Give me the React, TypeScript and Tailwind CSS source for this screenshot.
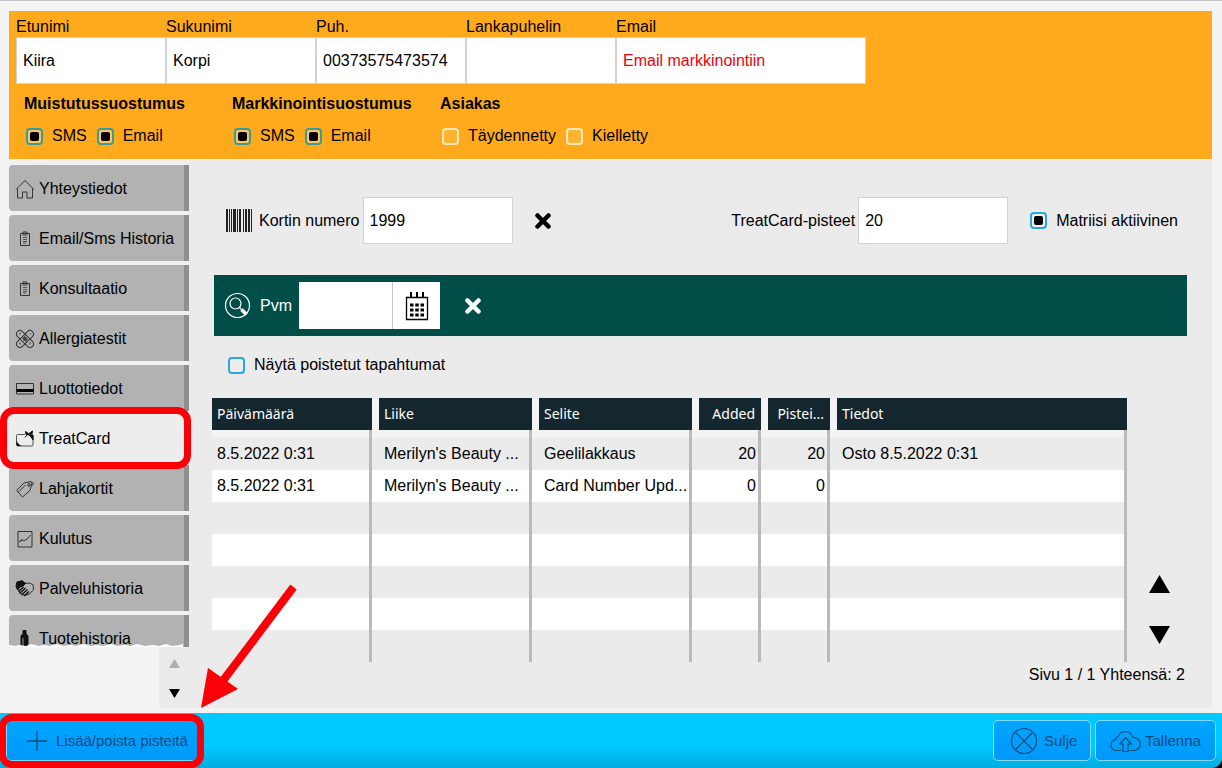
import React from "react";

type IconProps = { children: React.ReactNode };

const SideIcon = ({ children }: IconProps) => (
  <svg width="20" height="20" viewBox="0 0 20 20" fill="none" stroke="#333" strokeWidth="1" className="shrink-0" aria-hidden="true">
    {children}
  </svg>
);

const HomeIcon = () => (
  <SideIcon>
    <path d="M1 10.500 10 1.500l9 9M2.500 9.500v9.500h5v-6h4.500v6h5.500V9.500" />
  </SideIcon>
);

const ClipboardIcon = () => (
  <SideIcon>
    <path d="M5.500 4.500h9v12h-9zM8 4.500v-1.500h4v1.500M7.500 6h5" />
    <path d="M8 8.500h4M8 10.500h4M8 12.500h4M8 14h3" stroke="#555" />
  </SideIcon>
);

const PlasterIcon = () => (
  <SideIcon>
    <g transform="rotate(45 10 10)">
      <rect x="-0.500" y="6.500" width="21" height="7" rx="3.500" />
      <path d="M6.500 6.500v7M13.500 6.500v7" />
    </g>
    <g transform="rotate(-45 10 10)">
      <path d="M6.500 6.500H3a3.500 3.500 0 0 0 0 7h3.500M13.500 6.500H17a3.500 3.500 0 0 1 0 7h-3.500" />
    </g>
    <path d="M7.500 8.500l4 4M9 7.500l3.500 3.500M8.500 11.500l3-3" strokeWidth="1.200" />
    <path d="M4 5h1M5 4h1M14 15h1M15 14h1M4 14h1M5 15h1M15 5h1" />
  </SideIcon>
);

const CreditCardIcon = () => (
  <SideIcon>
    <path d="M1.500 4.500h17v10.500h-17z" />
    <path d="M1.500 11.500h17" stroke="#000" strokeWidth="3" />
  </SideIcon>
);

const GiftCardIcon = () => (
  <SideIcon>
    <path d="M10 5.500H2.500a1 1 0 0 0-1 1V16a1 1 0 0 0 1 1H17a1 1 0 0 0 1-1V6.500" stroke="#555" />
    <path d="M1.500 11.500c1 2.500 2.500 4 5 5.500H2.500l-1-1z" fill="#111" stroke="none" />
    <path d="M13 5.500c2 1 3.500 3 5 5.500V6z" fill="#111" stroke="#111" />
    <path d="M13.500 4.500 10.500 2.500l.5 3zM14 4.500 17.500 2 17 5z" fill="#111" stroke="#111" />
    <path d="m13 5-3 3.500" stroke="#111" />
  </SideIcon>
);

const TagIcon = () => (
  <SideIcon>
    <path d="M1.500 11.500 9 4l7-1.500 1 1.500-2 7.500L7.500 18zM3.500 13 10.500 6" />
    <circle cx="14" cy="6" r="1.300" />
    <path d="M16 3.500c2-1 2.500 1 1.500 3" />
  </SideIcon>
);

const ChartIcon = () => (
  <SideIcon>
    <path d="M3 2.500h14v15.500H3zM4.500 12.500l2.500-2 2 1.500 3-2 3.500-4M4.500 13l2.500-2" />
  </SideIcon>
);

const HandsIcon = () => (
  <SideIcon>
    <path d="M2 3.500 7 2l4 2.500 3-.5 4 1.500.5 5-4 4.500-5 1.500-4-2-3-5z" />
    <path d="M2 3 7 1.800l3.500 2.700L8 7 5 8l-2.500 3L1 7z" fill="#111" stroke="#111" />
    <path d="m3.500 12.500 5-4.500M4.500 14.500l6-5.500M6.500 16l6-5.500M9 17l5-4.500" stroke="#111" strokeWidth="1.400" />
  </SideIcon>
);

const BottleIcon = () => (
  <SideIcon>
    <path d="M8 1.500h3v3l2 2.500V20H6V7l2-2.500z" fill="#111" stroke="#111" />
    <path d="M8 9v9" stroke="#999" />
  </SideIcon>
);

const CrossIcon = () => (
  <svg width="16" height="16" viewBox="0 0 16 16" stroke="currentColor" strokeWidth="4.500" aria-hidden="true">
    <path d="M2.500 2.500l11 11M13.500 2.500l-11 11" strokeLinecap="round" />
  </svg>
);

const BarcodeIcon = () => (
  <svg width="27" height="23" viewBox="0 0 27 23" fill="#222" className="shrink-0" aria-hidden="true">
    <path d="M0 0h2v23H0zM3 0h1v23H3zM5 0h1v23H5zM7 0h3v23H7zM11 0h1v23h-1zM13 0h2v23h-2zM17 0h1v23h-1zM19 0h2v23h-2zM22 0h2v23h-2zM25 0h1v23h-1z" />
  </svg>
);

const SearchIcon = () => (
  <svg width="27" height="27" viewBox="0 0 27 27" fill="none" stroke="#fff" className="shrink-0" aria-hidden="true">
    <circle cx="13.500" cy="13.500" r="12" strokeWidth="1.200" />
    <circle cx="11.500" cy="11.500" r="5.500" strokeWidth="1.200" />
    <path d="m15.500 15.500 2 2" strokeWidth="1.200" />
    <path d="m17.500 17.500 5 5" strokeWidth="3.500" />
  </svg>
);

const CalendarIcon = () => (
  <svg width="24" height="30" viewBox="0 0 24 30" fill="none" stroke="#000" aria-hidden="true">
    <path d="M1.500 6.500h21v22h-21z" strokeWidth="1.300" />
    <path d="M6 1v6M12 1v6M18 1v6" strokeWidth="2" />
    <path d="M5 14h14M5 19h14M5 24h14" strokeWidth="3" strokeDasharray="3.500 1.750" />
  </svg>
);

const menu = [
  { label: "Yhteystiedot", Icon: HomeIcon },
  { label: "Email/Sms Historia", Icon: ClipboardIcon },
  { label: "Konsultaatio", Icon: ClipboardIcon },
  { label: "Allergiatestit", Icon: PlasterIcon },
  { label: "Luottotiedot", Icon: CreditCardIcon },
  { label: "TreatCard", Icon: GiftCardIcon, active: true },
  { label: "Lahjakortit", Icon: TagIcon },
  { label: "Kulutus", Icon: ChartIcon },
  { label: "Palveluhistoria", Icon: HandsIcon },
  { label: "Tuotehistoria", Icon: BottleIcon, cut: true },
];

const fields = [
  { id: "etunimi", label: "Etunimi", value: "Kiira", style: "w-[150px] text-black" },
  { id: "sukunimi", label: "Sukunimi", value: "Korpi", style: "w-[150px] text-black" },
  { id: "puh", label: "Puh.", value: "00373575473574", style: "w-[150px] text-black" },
  { id: "lankapuhelin", label: "Lankapuhelin", value: "", style: "w-[150px] text-black" },
  { id: "email", label: "Email", value: "Email markkinointiin", style: "w-[250px] text-[#f0000c]" },
];

const consents = [
  { title: "Muistutussuostumus", tone: "border-[#3a9c98]", options: ["SMS", "Email"], checked: true },
  { title: "Markkinointisuostumus", tone: "border-[#3a9c98]", options: ["SMS", "Email"], checked: true },
  { title: "Asiakas", tone: "border-[#ffe9b8]", options: ["Täydennetty", "Kielletty"], checked: false },
];

const columns = [
  { title: "Päivämäärä", width: "w-[160px]", numeric: false },
  { title: "Liike", width: "w-[160px]", numeric: false },
  { title: "Selite", width: "w-[160px]", numeric: false },
  { title: "Added", width: "w-[69px]", numeric: true },
  { title: "Pistei...", width: "w-[69px]", numeric: true },
  { title: "Tiedot", width: "", numeric: false },
];

const rows = [
  ["8.5.2022 0:31", "Merilyn's Beauty ...", "Geelilakkaus", "20", "20", "Osto 8.5.2022 0:31"],
  ["8.5.2022 0:31", "Merilyn's Beauty ...", "Card Number Upd...", "0", "0", ""],
  ["", "", "", "", "", ""],
  ["", "", "", "", "", ""],
  ["", "", "", "", "", ""],
  ["", "", "", "", "", ""],
  ["", "", "", "", "", ""],
];

function Check({ label, tone, checked }: { label: string; tone: string; checked?: boolean }) {
  return (
    <label className="flex items-center gap-[9px] whitespace-nowrap">
      <input
        type="checkbox"
        defaultChecked={checked}
        className={`grid size-[17px] shrink-0 appearance-none place-content-center rounded-[4px] border-2 bg-white/10 checked:bg-white/30 checked:before:block checked:before:size-[9px] checked:before:rounded-[2px] checked:before:bg-black checked:before:content-[''] ${tone}`}
      />
      {label}
    </label>
  );
}

function Header() {
  return (
    <header className="mr-[10px] ml-[9px] mt-[10px] bg-[#ffaa1c] pb-[11px] pl-[7px] text-black">
      <div className="flex pt-[5px]">
        {fields.map((f) => (
          <div key={f.id} className="flex flex-col">
            <label htmlFor={f.id} className="leading-[21px]">
              {f.label}
            </label>
            <input
              id={f.id}
              defaultValue={f.value}
              className={`h-[47px] border border-[#d2d2d2] bg-white px-[6px] outline-none ${f.style}`}
            />
          </div>
        ))}
      </div>
      <div className="flex pt-2 pl-2">
        {consents.map((c) => (
          <fieldset key={c.title} className="w-52">
            <legend className="font-bold leading-6">{c.title}</legend>
            <div className="flex gap-[10px] pt-2 pl-[2px]">
              {c.options.map((o) => (
                <Check key={o} label={o} tone={c.tone} checked={c.checked} />
              ))}
            </div>
          </fieldset>
        ))}
      </div>
    </header>
  );
}

function Sidebar() {
  return (
    <aside className="flex w-[180px] shrink-0 flex-col bg-[#f3f3f3]">
      <nav className="flex flex-col gap-1 bg-[#f1f1f1] pt-[5px]">
        {menu.map(({ label, Icon, active, cut }) => (
          <div key={label} className={cut ? "relative h-8 overflow-hidden" : "relative h-[46px]"}>
            <button
              type="button"
              className={`flex h-[46px] w-full items-center gap-1 rounded-l-[4px] pt-[2px] pl-[6px] text-left text-black ${
                active ? "bg-[#ededed]" : "border-r-[5px] border-[#8f8f8f] bg-[#b2b2b2]"
              }`}
            >
              <Icon />
              {label}
            </button>
            {active && (
              <span className="pointer-events-none absolute -top-2 -right-[2px] -bottom-2 -left-[9px] z-10 rounded-[14px] border-[7px] border-[#fb0007]" />
            )}
            {cut && (
              <svg className="absolute bottom-0 left-0 w-full" height="4" viewBox="0 0 180 4" preserveAspectRatio="none" aria-hidden="true">
                <path
                  fill="#fff"
                  d="M0 4V2l6 1 5-1 6 1 5-2 8 2 5-1 6 1 7-2 6 2 8-1 5 1 7-2 8 2 6-1 6 1 8-2 6 2 8-1 6 1 6-2 8 2 8-1 6 1 7-2 6 2 8-1 3-1v3z"
                />
              </svg>
            )}
          </div>
        ))}
      </nav>
      <div className="flex w-[30px] flex-1 flex-col items-center gap-[21px] self-end bg-[#ebebeb] pt-3">
        <button type="button" aria-label="Edellinen">
          <svg width="11" height="9" viewBox="0 0 11 9" fill="#b0b0b0" className="block" aria-hidden="true">
            <path d="M5.500 0 11 9H0z" />
          </svg>
        </button>
        <button type="button" aria-label="Seuraava">
          <svg width="11" height="9" viewBox="0 0 11 9" className="block" aria-hidden="true">
            <path d="M0 0h11L5.500 9z" />
          </svg>
        </button>
      </div>
    </aside>
  );
}

function History() {
  return (
    <table className="w-full flex-1 table-fixed border-separate border-spacing-0">
      <thead>
        <tr>
          {columns.map((c, i) => (
            <th
              key={c.title}
              className={`h-8 overflow-hidden border-[#f3f3f3] bg-[#15272e] p-0 font-['Noto_Sans'] text-[14px] font-normal whitespace-nowrap text-white ${c.width} ${
                i > 0 ? "border-l-[7px]" : ""
              } ${c.numeric ? "pr-[6px] text-right" : "pl-[5px] text-left"}`}
            >
              {c.title}
            </th>
          ))}
        </tr>
      </thead>
      <tbody>
        <tr aria-hidden="true">
          {columns.map((c) => (
            <td key={c.title} className="h-2 border-r-[3px] border-[#bababa] bg-[#f3f3f3] p-0" />
          ))}
        </tr>
        {rows.map((r, y) => (
          <tr key={y} className={y % 2 ? "bg-white" : "bg-[#ebebeb]"}>
            {r.map((cell, x) => (
              <td
                key={x}
                className={`h-8 overflow-hidden border-r-[3px] border-[#bababa] py-0 whitespace-nowrap ${
                  columns[x].numeric ? "pr-[2px] pl-0 text-right" : x === 0 ? "pr-0 pl-[5px]" : "pr-0 pl-3"
                }`}
              >
                {cell}
              </td>
            ))}
          </tr>
        ))}
      </tbody>
    </table>
  );
}

function CardPanel() {
  return (
    <main className="flex-1 bg-[#ebebeb] pt-[37px] pr-[25px] pb-5 pl-[23px] text-black">
      <div className="flex items-center pr-[9px] pl-[14px]">
        <BarcodeIcon />
        <label htmlFor="kortti" className="mr-[3px] ml-[6px]">
          Kortin numero
        </label>
        <input id="kortti" defaultValue="1999" className="h-[47px] w-[150px] border border-[#d2d2d2] bg-white px-[6px] outline-none" />
        <button type="button" aria-label="Tyhjennä kortti" className="ml-[22px]">
          <CrossIcon />
        </button>
        <label htmlFor="pisteet" className="mr-[3px] ml-auto">
          TreatCard-pisteet
        </label>
        <input id="pisteet" defaultValue="20" className="mr-[22px] h-[47px] w-[150px] border border-[#d2d2d2] bg-white px-[6px] outline-none" />
        <Check label="Matriisi aktiivinen" tone="border-[#2ba6df]" checked />
      </div>

      <div className="mt-[31px] ml-[2px] flex h-[61px] items-center bg-[#014d47] pl-[10px] text-white">
        <SearchIcon />
        <label htmlFor="pvm" className="mr-[7px] ml-[9px]">
          Pvm
        </label>
        <input id="pvm" className="h-[47px] w-[93px] bg-white px-[6px] text-black outline-none" />
        <button type="button" aria-label="Kalenteri" className="flex h-[47px] w-12 items-center justify-center border-l border-[#c8c8c8] bg-white">
          <CalendarIcon />
        </button>
        <button type="button" aria-label="Tyhjennä päivä" className="ml-[25px]">
          <CrossIcon />
        </button>
      </div>

      <div className="mb-1 flex h-[58px] items-center pl-4">
        <Check label="Näytä poistetut tapahtumat" tone="border-[#2ba6df]" />
      </div>

      <div className="flex">
        <History />
        <div className="flex w-[60px] shrink-0 flex-col items-end justify-end gap-[33px] pr-[17px] pb-[18px]">
          <button type="button" aria-label="Edellinen sivu">
            <svg width="21" height="18" viewBox="0 0 21 18" className="block" aria-hidden="true">
              <path d="M10.500 0 21 18H0z" />
            </svg>
          </button>
          <button type="button" aria-label="Seuraava sivu">
            <svg width="21" height="18" viewBox="0 0 21 18" className="block" aria-hidden="true">
              <path d="M0 0h21L10.500 18z" />
            </svg>
          </button>
        </div>
      </div>
      <p className="pr-[2px] text-right leading-[26px]">Sivu 1 / 1 Yhteensä: 2</p>
    </main>
  );
}

const footerButton =
  "flex h-[41px] items-center rounded-[5px] border border-[#7fdcff] bg-linear-to-b from-[#00a6ff] to-[#0098fb] text-[15px] text-[#0b4a7c]";

function Footer() {
  return (
    <div className="bg-black">
      <footer className="flex h-[55px] items-start rounded-br-[10px] bg-linear-to-b from-[#00c9ff] from-60% to-[#00addf] px-[6px] pt-[7px]">
        <div className="relative">
          <button type="button" className={`${footerButton} w-[192px] gap-[9px] pl-5`}>
            <svg width="20" height="20" viewBox="0 0 20 20" stroke="#0b4a7c" strokeWidth="1.300" aria-hidden="true">
              <path d="M10 0v20M0 10h20" />
            </svg>
            Lisää/poista pisteitä
          </button>
          <span className="pointer-events-none absolute -top-[6px] -right-[6px] -bottom-[7px] -left-[7px] rounded-[13px] border-[7px] border-[#fb0007]" />
        </div>
        <button type="button" className={`${footerButton} ml-auto w-[98px] gap-[6px] pl-4`}>
          <svg width="28" height="28" viewBox="0 0 28 28" fill="none" stroke="#0b4a7c" strokeWidth="1.200" aria-hidden="true">
            <circle cx="14" cy="14" r="12.500" />
            <path d="m6 6 16 16M22 6 6 22" />
          </svg>
          Sulje
        </button>
        <button type="button" className={`${footerButton} ml-1 w-[121px] gap-1 pl-[14px]`}>
          <svg width="31" height="24" viewBox="0 0 31 24" fill="none" stroke="#0b4a7c" strokeWidth="1.200" aria-hidden="true">
            <path d="M11 21.500H6.500a5.500 5.500 0 0 1-1-10.900A4 4 0 0 1 8 7.500 8 8 0 0 1 23 8.500a6.500 6.500 0 0 1 1.500 13H19" />
            <path d="M13 22.500V15h-3l5.500-6.500L21 15h-3v7.500z" />
          </svg>
          Tallenna
        </button>
      </footer>
    </div>
  );
}

export default function App() {
  return (
    <div className="relative flex min-h-screen flex-col border-t border-[#c6c4c6] bg-[#f3f3f3] font-['Liberation_Sans',Arial,sans-serif] text-[16px] leading-6">
      <Header />
      <div className="mr-[10px] mb-[5px] ml-[9px] flex flex-1 pt-px">
        <Sidebar />
        <CardPanel />
      </div>
      <Footer />
      <svg className="pointer-events-none absolute bottom-[59px] left-[198px]" width="102" height="128" viewBox="0 0 102 128" aria-hidden="true">
        <path d="M95.500 6 24 101" stroke="#fb0007" strokeWidth="8" />
        <path d="m3 127 7-40 30 21z" fill="#fb0007" />
      </svg>
    </div>
  );
}
